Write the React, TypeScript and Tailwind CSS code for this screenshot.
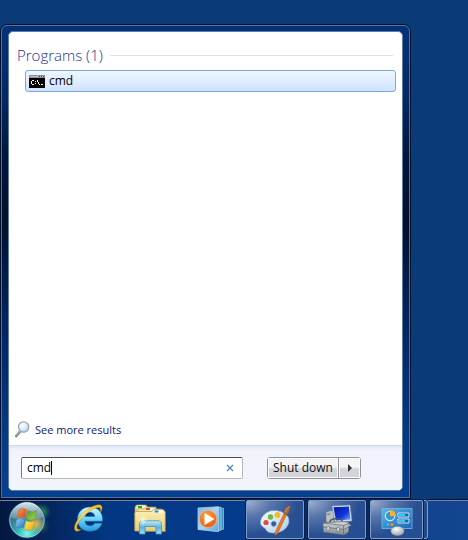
import { useState } from "react";
import type { ReactNode } from "react";

function ConsoleIcon() {
  return (
    <svg width="16" height="13" viewBox="0 0 16 13" aria-hidden="true" shapeRendering="crispEdges">
      <rect width="16" height="13" fill="#8b8f96" />
      <rect x="1" y="1" width="14" height="1" fill="#b9bdc4" />
      <path d="M10 1h1v1h-1zM12 1h1v1h-1zM14 1h1v1h-1z" fill="#40444c" />
      <rect x="0" y="3" width="16" height="10" fill="#000" />
      <path
        d="M3 5h2v1h-2zM2 6h1v3h-1zM3 9h2v1h-2zM6 6h1v1h-1zM6 8h1v1h-1zM8 5h1v2h-1zM9 7h1v2h-1zM10 9h1v1h-1zM12 9h2v1h-2z"
        fill="#f5f5f5"
      />
    </svg>
  );
}

function MagnifierIcon() {
  return (
    <svg width="15" height="17" viewBox="0 0 15 17" aria-hidden="true">
      <defs>
        <radialGradient id="lens" cx="0.4" cy="0.35" r="0.7">
          <stop offset="0" stopColor="#ffffff" />
          <stop offset="0.55" stopColor="#d5ecfb" />
          <stop offset="1" stopColor="#9cc8ea" />
        </radialGradient>
      </defs>
      <path d="M5 10.5 1.3 15" stroke="#77787c" strokeWidth="2.6" strokeLinecap="round" />
      <path d="M4.8 10.3 1.4 14.4" stroke="#c9cacc" strokeWidth="1" strokeLinecap="round" />
      <circle cx="8.6" cy="6" r="5.2" fill="url(#lens)" stroke="#a3a7ad" strokeWidth="1.3" />
      <path d="M5.5 5.5a3.3 3.3 0 0 1 3-3" stroke="#fff" strokeWidth="1" fill="none" />
    </svg>
  );
}

function StartOrb() {
  return (
    <svg width="54" height="39" viewBox="0 1 54 39" aria-hidden="true">
      <defs>
        <radialGradient id="orb" cx="0.5" cy="0.88" r="0.85">
          <stop offset="0" stopColor="#7ff4ee" />
          <stop offset="0.3" stopColor="#35b8b5" />
          <stop offset="0.6" stopColor="#3b7f92" />
          <stop offset="1" stopColor="#2d5c82" />
        </radialGradient>
        <linearGradient id="orbGloss" x1="0" y1="0" x2="0" y2="1">
          <stop offset="0" stopColor="#f6fafb" stopOpacity="0.9" />
          <stop offset="1" stopColor="#bcd3da" stopOpacity="0.3" />
        </linearGradient>
        <radialGradient id="greenGlow">
          <stop offset="0" stopColor="#4dc83e" stopOpacity="0.9" />
          <stop offset="1" stopColor="#1d8a50" stopOpacity="0" />
        </radialGradient>
        <radialGradient id="warmGlow">
          <stop offset="0" stopColor="#ffb43a" stopOpacity="0.9" />
          <stop offset="1" stopColor="#ffb43a" stopOpacity="0" />
        </radialGradient>
        <linearGradient id="flagRed" x1="0" y1="0" x2="1" y2="1">
          <stop offset="0" stopColor="#f7a04e" />
          <stop offset="1" stopColor="#d93a1c" />
        </linearGradient>
        <linearGradient id="flagGreen" x1="0" y1="0" x2="1" y2="1">
          <stop offset="0" stopColor="#4f9a25" />
          <stop offset="1" stopColor="#a9db53" />
        </linearGradient>
        <linearGradient id="flagBlue" x1="0" y1="0" x2="1" y2="1">
          <stop offset="0" stopColor="#9ad6f5" />
          <stop offset="1" stopColor="#2474c4" />
        </linearGradient>
        <linearGradient id="flagYellow" x1="0" y1="0" x2="1" y2="1">
          <stop offset="0" stopColor="#fff05c" />
          <stop offset="1" stopColor="#f2a317" />
        </linearGradient>
      </defs>
      <ellipse cx="41" cy="12" rx="10" ry="9" fill="url(#greenGlow)" />
      <ellipse cx="43" cy="26" rx="7" ry="9" fill="url(#greenGlow)" opacity="0.4" />
      <circle cx="27" cy="20" r="18" fill="url(#orb)" stroke="#163f67" strokeWidth="1" />
      <circle cx="27" cy="20" r="17.2" fill="none" stroke="#b8dfe2" strokeOpacity="0.7" />
      <path d="M10.5 17a16.6 16.6 0 0 1 33 0c-6 3-10 0-16 1-6 1-11 2-17-1z" fill="url(#orbGloss)" />
      <ellipse cx="36" cy="24" rx="9" ry="9" fill="url(#warmGlow)" />
      <path d="M18.8 9.7c2.7-1.6 5.4-1.7 8 0l-1.7 8.4c-2.7-1.5-5.5-1.5-8.2 0z" fill="url(#flagRed)" stroke="#c65d30" strokeWidth="0.4" />
      <path d="M28.1 10.6c3 1.7 5.9 1.7 8.8 0l-2 8.4c-2.9 1.6-5.7 1.5-8.5-.1z" fill="url(#flagGreen)" stroke="#55862c" strokeWidth="0.4" />
      <path d="M16.5 19.7c2.8-1.5 5.5-1.5 8.2 0L23 28c-2.7-1.5-5.4-1.5-8.2 0z" fill="url(#flagBlue)" stroke="#2b68a5" strokeWidth="0.4" />
      <path d="M26 20.7c2.9 1.6 5.7 1.6 8.6 0l-2 8.3c-2.9 1.6-5.6 1.5-8.3-.1z" fill="url(#flagYellow)" stroke="#c88a21" strokeWidth="0.4" />
    </svg>
  );
}

function ExplorerLogo() {
  return (
    <svg width="32" height="34" viewBox="0 0 32 34" aria-hidden="true">
      <defs>
        <linearGradient id="ieBlue" x1="0" y1="0" x2="0" y2="1">
          <stop offset="0" stopColor="#d2f5ff" />
          <stop offset="0.45" stopColor="#73d8fb" />
          <stop offset="1" stopColor="#2399dd" />
        </linearGradient>
        <linearGradient id="ieGold" x1="0" y1="1" x2="1" y2="0">
          <stop offset="0" stopColor="#f1ad13" />
          <stop offset="0.5" stopColor="#ffe35a" />
          <stop offset="1" stopColor="#f4b51b" />
        </linearGradient>
      </defs>
      <path
        fillRule="evenodd"
        d="M17 5C9.500 5 4.500 10.300 4.500 17.200 4.500 24.300 9.700 29.300 17 29.300c6 0 10.300-3 12-8h-7.300c-.9 1.700-2.500 2.500-4.600 2.500-3 0-4.900-1.700-5.200-4.600h17.600C30.200 10.700 25 5 17 5zM12 14.500c.6-2.700 2.400-4.200 5-4.200s4.400 1.500 4.800 4.200z"
        fill="url(#ieBlue)"
        stroke="#1979bd"
        strokeWidth="0.5"
      />
      <path
        d="M8.300 27.300c-3.300 2.600-6 2.500-6.600.3C.1 22 8.500 10.500 18 5.300 23.500 2.300 27.700 2 28.700 4.300c.8 1.700.1 4-1.400 6.500.5-2.400.5-4-.5-4.800-1.800-1.400-6.500.4-11.300 3.900C8 15.300 2.800 23.200 4.100 26.200c.6 1.400 2.200 1.700 4.200 1.100z"
        fill="url(#ieGold)"
        stroke="#c38614"
        strokeWidth="0.4"
      />
    </svg>
  );
}

function FolderIcon() {
  return (
    <svg width="34" height="32" viewBox="0 0 34 32" aria-hidden="true">
      <defs>
        <linearGradient id="folder" x1="0" y1="0" x2="0" y2="1">
          <stop offset="0" stopColor="#fbf0b5" />
          <stop offset="1" stopColor="#e8cd75" />
        </linearGradient>
        <linearGradient id="stand" x1="0" y1="0" x2="0" y2="1">
          <stop offset="0" stopColor="#c4edfa" />
          <stop offset="0.5" stopColor="#5fb2df" />
          <stop offset="1" stopColor="#a6e0f6" />
        </linearGradient>
      </defs>
      <path d="M2 27V4l1.500-2H13l1.500 2H23v23z" fill="#f1dc8d" stroke="#b59b4c" strokeWidth="0.7" />
      <path d="M4.500 2.600h7v2.500h-7z" fill="#fff" />
      <path d="M5 3h4v2H5z" fill="#20a733" />
      <path d="M4 28V7l1-1.200h7L13.500 4.500H22L23.500 6H29v22z" fill="#f7e6a4" stroke="#b59b4c" strokeWidth="0.7" />
      <path d="M12.500 4.800h8v2.400h-8z" fill="#fff" />
      <path d="M13 5h4v2h-4z" fill="#e4462b" />
      <path d="M1.800 28V10l1-1.500h16L20 6.700h10.500L32.300 9v19.500z" fill="url(#folder)" stroke="#ad9247" strokeWidth="0.7" />
      <path d="M20.500 7.300h9v2.300h-9z" fill="#fff" />
      <path d="M21.500 7.500h4v2h-4z" fill="#2689d8" />
      <path d="M6.500 31V21.500c0-2.500 1.200-3.700 3.700-3.700h14.600c2.500 0 3.700 1.200 3.700 3.700V31H23v-7.500H12V31z" fill="url(#stand)" stroke="#4490bf" strokeWidth="0.8" />
      <path d="M10 12.500v9M5.500 17h9M7 14l6 6M13 14l-6 6" stroke="#fff" strokeWidth="0.8" opacity="0.85" />
    </svg>
  );
}

function MediaPlayerIcon() {
  return (
    <svg width="28" height="28" viewBox="0 0 28 28" aria-hidden="true">
      <defs>
        <linearGradient id="mediaCard" x1="0" y1="0" x2="1" y2="1">
          <stop offset="0" stopColor="#80b8df" />
          <stop offset="0.5" stopColor="#a9d1ed" />
          <stop offset="1" stopColor="#62a7d8" />
        </linearGradient>
        <radialGradient id="mediaOrange" cx="0.4" cy="0.3" r="0.8">
          <stop offset="0" stopColor="#ffa13c" />
          <stop offset="1" stopColor="#e65209" />
        </radialGradient>
      </defs>
      <path d="M20 3.500l6.500-.3v21l-6.500.6z" fill="#3a91c7" stroke="#8fd0f0" strokeWidth="0.7" />
      <path d="M18 2.500l6-.3v23l-6 .6z" fill="#4b9fd0" stroke="#b4e0f5" strokeWidth="0.7" />
      <path d="M1 3l20.500-1.300v25L1 24.500z" fill="url(#mediaCard)" stroke="#b8dcf1" strokeWidth="0.7" />
      <circle cx="11" cy="14" r="8.600" fill="url(#mediaOrange)" stroke="#f6b681" strokeWidth="0.6" />
      <path d="M7.500 8v12l10-6z" fill="#fff" />
    </svg>
  );
}

function PaintIcon() {
  return (
    <svg width="34" height="32" viewBox="0 0 34 32" aria-hidden="true">
      <defs>
        <linearGradient id="palette" x1="0" y1="0" x2="1" y2="1">
          <stop offset="0" stopColor="#ffffff" />
          <stop offset="1" stopColor="#a9cde9" />
        </linearGradient>
      </defs>
      <path
        fillRule="evenodd"
        d="M17 6.500C9 6 2.500 12 2.500 18.500c0 3.500 2 4 4 5.500s1.500 3.500 5 4.500C20 31 30 25.500 31 18 31.700 11 25 7 17 6.500zM14.500 17.500a2.600 2.600 0 1 1 0 4.600 2.600 2.600 0 0 1 0-4.600z"
        fill="url(#palette)"
        stroke="#6fa1cb"
        strokeWidth="0.7"
      />
      <circle cx="8" cy="18.500" r="2.600" fill="#e34b40" />
      <circle cx="12.500" cy="13" r="2.700" fill="#6cbb3c" />
      <circle cx="19.500" cy="11" r="3" fill="#f7bc29" />
      <path d="M26 9.500l2.500 1.300L20 28.800c-1 2-2.500 2.300-3.300 2.200.4-1.500.4-3 1.500-5z" fill="#e87b23" stroke="#b55310" strokeWidth="0.5" />
      <path d="M26 9.500c-1-3.500 2-7 6-8.500.5 4-.5 8-3.500 9.800z" fill="#9d6b48" stroke="#6f472d" strokeWidth="0.5" />
      <path d="M27.500 8c.5-2.500 2-4 3.700-5.500" stroke="#d4aa85" strokeWidth="0.7" fill="none" />
    </svg>
  );
}

function ToolboxIcon() {
  return (
    <svg width="34" height="32" viewBox="0 0 34 32" aria-hidden="true">
      <defs>
        <linearGradient id="screen" x1="0" y1="0" x2="1" y2="1">
          <stop offset="0" stopColor="#0614a8" />
          <stop offset="0.6" stopColor="#1136dc" />
          <stop offset="1" stopColor="#71b1ff" />
        </linearGradient>
        <linearGradient id="steel" x1="0" y1="0" x2="0" y2="1">
          <stop offset="0" stopColor="#d9dde0" />
          <stop offset="1" stopColor="#7f878d" />
        </linearGradient>
      </defs>
      <path d="M6 8l5-1.500 3 .8v12L6 18z" fill="#b9c0c4" stroke="#6b757d" strokeWidth="0.6" />
      <path d="M7.300 10.500l3-.7" stroke="#4f5b63" strokeWidth="0.8" />
      <path d="M12 2l18-1 2 16L15 18z" fill="#dce6ed" stroke="#7e8b97" strokeWidth="0.6" />
      <path d="M13.500 3.300l15.300-.8 1.700 13L16 16.500z" fill="url(#screen)" />
      <path d="M21 18h7l3 4h-8z" fill="#bdc9d0" />
      <path d="M10 18c0-4 12-4.500 12.500-.5" fill="none" stroke="#50585f" strokeWidth="1.500" />
      <path d="M3 19l21-1.500 5 2-.5 8.500L24 31 3.500 28z" fill="url(#steel)" stroke="#646d73" strokeWidth="0.6" />
      <path d="M3 19l20.500 2.500L29 19.500M23.500 21.500V31M3 23l20.500 2.500 5.500-2.500" fill="none" stroke="#697278" strokeWidth="0.8" />
      <path d="M7 22.300h2.200v4H7zM17 23.300h2.200v4H17z" fill="#eef1f2" stroke="#50595f" strokeWidth="0.5" />
    </svg>
  );
}

function ControlPanelIcon() {
  return (
    <svg width="34" height="32" viewBox="0 0 34 32" aria-hidden="true">
      <defs>
        <linearGradient id="panel" x1="0" y1="0" x2="1" y2="1">
          <stop offset="0" stopColor="#5ab3ea" />
          <stop offset="1" stopColor="#1769b4" />
        </linearGradient>
        <radialGradient id="knob" cx="0.4" cy="0.3" r="0.8">
          <stop offset="0" stopColor="#ffffff" />
          <stop offset="1" stopColor="#96999c" />
        </radialGradient>
      </defs>
      <path d="M2 4.500h30v20H2z" fill="url(#panel)" stroke="#72bceb" strokeWidth="0.8" />
      <circle cx="10" cy="12" r="4.700" fill="#3692d3" stroke="#c6e9fa" strokeWidth="1.300" />
      <path d="M10 12V6a6 6 0 0 1 6 6z" fill="#fdb02b" />
      <path d="M18 9h11v4H18zM18 15h11v4H18z" fill="#1269b2" stroke="#d8f0fc" strokeWidth="0.9" />
      <path d="M19 10h6v2h-6zM19 16h6v2h-6z" fill="#3bc3ee" />
      <circle cx="8" cy="20.500" r="1.200" fill="#37c8f2" />
      <circle cx="12" cy="20.500" r="1.500" fill="#f7a93a" stroke="#bd5a12" strokeWidth="0.5" />
      <path d="M11 27c0-3 3-4.500 6.500-4.500S24 24 24 27s-3 4.500-6.500 4.500S11 30 11 27z" fill="url(#knob)" stroke="#8d9092" strokeWidth="0.5" />
    </svg>
  );
}

function TaskButton({ label, children, className = "w-[60px]" }: { label: string; children: ReactNode; className?: string }) {
  return (
    <button
      type="button"
      aria-label={label}
      className={`flex h-full items-center justify-center rounded-[3px] border border-[#06204f] bg-[#264f93] ${className}`}
    >
      <span className="flex h-full w-full items-center justify-center rounded-[2px] border border-[#809dc9] bg-[radial-gradient(ellipse_at_top_left,#9fb0d0_0%,#5876ac_30%,#294f92_65%,#234d93_100%)]">
        {children}
      </span>
    </button>
  );
}

function Launcher({ label, children }: { label: string; children: ReactNode }) {
  return (
    <button type="button" aria-label={label} className="flex w-[61px] shrink-0 items-center justify-center pb-1">
      {children}
    </button>
  );
}

function Taskbar() {
  return (
    <nav
      aria-label="Taskbar"
      className="flex h-[41px] shrink-0 overflow-hidden bg-[linear-gradient(90deg,#02183f_0px,#04265f_50px,#033784_110px,#053b8b_240px,#144590_100%)]"
    >
      <div className="flex shrink-0 border-t border-[#020d26]">
        <div className="flex border-t border-[#7186ab] pr-1">
          <button type="button" aria-label="Start" className="flex w-[58px] shrink-0 items-start">
            <StartOrb />
          </button>
          <Launcher label="Internet Explorer">
            <ExplorerLogo />
          </Launcher>
          <Launcher label="Windows Explorer">
            <FolderIcon />
          </Launcher>
          <Launcher label="Media Player">
            <MediaPlayerIcon />
          </Launcher>
        </div>
      </div>
      <div className="flex shrink-0 gap-0.5 bg-[#0a2a60]">
        <TaskButton label="Paint">
          <PaintIcon />
        </TaskButton>
        <TaskButton label="Computer Management">
          <ToolboxIcon />
        </TaskButton>
        <div className="flex">
          <TaskButton label="Control Panel" className="w-[55px]">
            <ControlPanelIcon />
          </TaskButton>
          <span className="my-px w-[4px] rounded-r-[3px] border-y border-r border-[#7f9cc9] bg-[#23498b]" />
        </div>
      </div>
      <div className="flex flex-1 border-t border-[#020d26]">
        <div className="flex-1 border-t border-[#7186ab]" />
      </div>
    </nav>
  );
}

function StartMenu() {
  const [query, setQuery] = useState("cmd");
  return (
    <section
      aria-label="Start menu"
      className="flex w-[411px] max-w-full rounded-t-[7px] border border-[#020f2c] bg-[linear-gradient(180deg,#033279_0%,#032a68_14%,#02163a_28%,#020f2b_42%,#021a45_52%,#03296a_68%,#043b86_88%,#053f90_100%)]"
    >
      <div className="flex min-w-0 flex-1 rounded-t-md border border-[#53719e] px-1.5 pt-[5px] pb-1.5">
        <div className="flex min-w-0 flex-1 flex-col overflow-hidden rounded-[5px] border border-[#5f7ca8] bg-white">
          <div className="flex flex-1 flex-col px-1.5 pt-[11px]">
            <div className="flex h-6 items-center gap-[7px] pr-[3px] pl-0.5">
              <h2 className="text-[15px] leading-6 font-light text-[#1e3287]">Programs (1)</h2>
              <hr className="flex-1 border-[#e2e2e2]" />
            </div>
            <button
              type="button"
              className="mt-[3px] ml-2.5 flex h-[22px] items-center gap-1 rounded-[3px] border border-[#7da7dc] bg-linear-to-b from-[#f1f7ff] to-[#cfe3ff] px-[3px] text-[12px] leading-4 text-black"
            >
              <ConsoleIcon />
              cmd
            </button>
            <a href="#results" className="mt-auto mb-[7px] flex items-center gap-[5px] self-start text-[11px] leading-4 text-[#10167c]">
              <MagnifierIcon />
              See more results
            </a>
          </div>
          <div className="flex h-[45px] items-center border-t border-[#cfdbea] bg-[#f1f4fc] pl-3 shadow-[inset_0_2px_2px_#dfe8f4]">
            <div className="flex h-[22px] w-[222px] items-center rounded-[2px] border border-[#b4b8bd] border-t-[#4a4d52] border-l-[#777a80] bg-white pl-[5px]">
              <div className="flex min-w-0 flex-1 items-center">
                <input
                  type="text"
                  aria-label="Search programs and files"
                  value={query}
                  onChange={(event) => setQuery(event.target.value)}
                  className="field-sizing-content min-w-0 bg-transparent text-[12px] leading-4 text-black outline-none"
                />
                <span className="h-3.5 w-px bg-black" />
              </div>
              <button type="button" aria-label="Clear search" onClick={() => setQuery("")} className="flex h-5 w-6 items-center justify-center">
                <svg width="8" height="8" viewBox="0 0 8 8" aria-hidden="true">
                  <path d="M1 1l6 6M7 1L1 7" stroke="#4b86b8" strokeWidth="1.300" />
                </svg>
              </button>
            </div>
            <div className="ml-6 flex h-[22px] rounded-[3px] border border-[#8f9196] bg-linear-to-b from-[#f4f4f5] from-45% to-[#d4d5da] to-55% text-[12px] leading-4 text-[#111]">
              <button type="button" className="w-[71px] border-r border-[#8f9196] text-center whitespace-nowrap shadow-[inset_0_0_0_1px_#fafafa]">
                Shut down
              </button>
              <button type="button" aria-label="Shut down options" className="flex w-[21px] items-center justify-center shadow-[inset_0_0_0_1px_#fafafa]">
                <svg width="4" height="8" viewBox="0 0 4 8" aria-hidden="true">
                  <path d="M0 0l4 4-4 4z" fill="#333" />
                </svg>
              </button>
            </div>
          </div>
        </div>
      </div>
    </section>
  );
}

export default function App() {
  return (
    <div className="flex min-h-screen flex-col bg-[#0b3b77] font-['Open_Sans','Noto_Sans',sans-serif]">
      <main className="flex flex-1 pt-6">
        <StartMenu />
      </main>
      <Taskbar />
    </div>
  );
}
